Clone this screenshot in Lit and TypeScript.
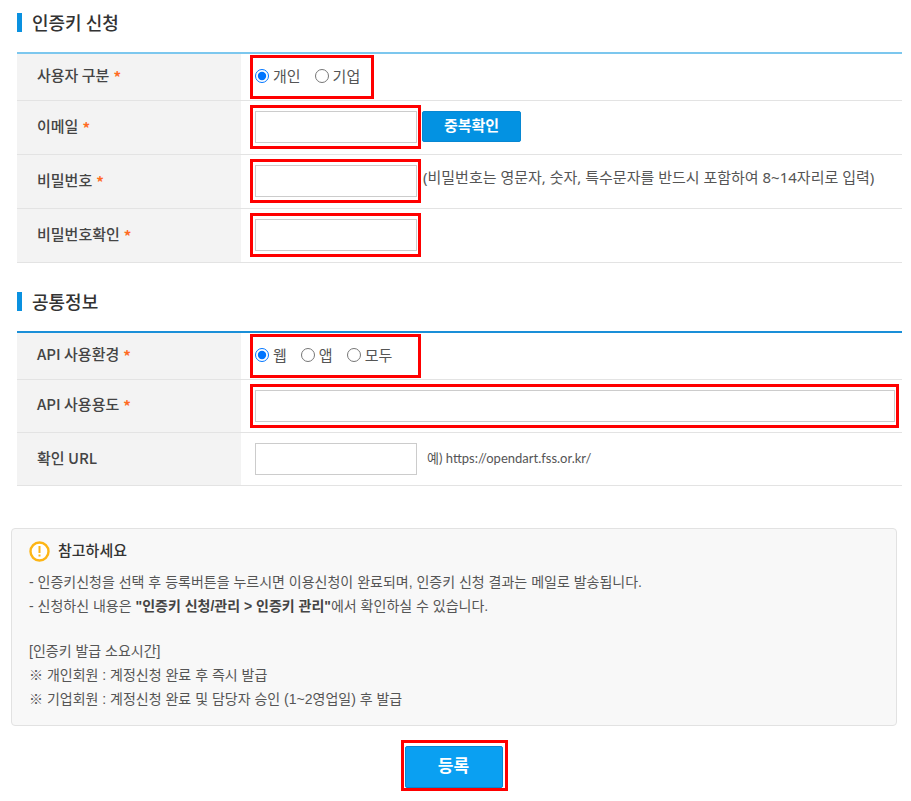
import { LitElement, html, css, nothing } from "lit";
import { customElement, property } from "lit/decorators.js";

const requiredMark = html`<span class="required" aria-hidden="true">*</span>`;

@customElement("section-title")
class SectionTitle extends LitElement {
  @property() text = "";

  static styles = css`
    :host {
      display: block;
    }
    .title {
      margin: 0 0 20px;
      padding-left: 10px;
      border-left: 5px solid #0a91e0;
      font-family: "Noto Sans CJK KR", "Noto Sans", sans-serif;
      font-size: 18px;
      line-height: 19px;
      font-weight: 500;
      color: #333;
    }
  `;

  render() {
    return html`<h2 class="title">${this.text}</h2>`;
  }
}

@customElement("app-root")
class AppRoot extends LitElement {
  static styles = css`
    :host {
      display: block;
      background: #fff;
      color: #555;
      font-family: "Noto Sans", "Noto Sans CJK KR", sans-serif;
      font-size: 14px;
      line-height: 24px;
    }
    * {
      box-sizing: border-box;
    }
    .page {
      padding: 13px 9px 10px 11px;
    }
    .section {
      margin: 0 0 29px 6px;
    }
    .sheet {
      width: 100%;
      border-collapse: separate;
      border-spacing: 0;
      border-top: 2px solid #7cc7ee;
    }
    .sheet.strong {
      border-top-color: #1a8fd8;
    }
    th,
    td {
      height: 54px;
      padding: 0;
      border-bottom: 1px solid #e3e3e3;
      vertical-align: middle;
    }
    .strong th,
    .strong td {
      height: 53px;
    }
    .sheet .short th,
    .sheet .short td {
      height: 47px;
    }
    th {
      width: 224px;
      padding: 0 0 2px 20px;
      background: #f3f3f3;
      text-align: left;
      font-family: "Noto Sans CJK KR", "Noto Sans", sans-serif;
      font-size: 15px;
      font-weight: 500;
      color: #444;
    }
    td {
      padding: 0 3px 1px 9px;
    }
    .short td {
      padding-bottom: 0;
    }
    .required {
      margin-left: 4px;
      font-weight: 700;
      vertical-align: -2px;
      color: #ff6a22;
    }
    .line {
      display: flex;
      align-items: center;
    }
    .mark {
      display: flex;
      align-items: center;
      height: 44px;
      padding: 0 1px 0 2px;
      border: 3px solid #f00;
    }
    .field {
      width: 171px;
    }
    .wide {
      width: 100%;
    }
    .plain {
      border-color: transparent;
    }
    .radios {
      gap: 14px;
      font-size: 15px;
    }
    .pair {
      width: 124px;
    }
    .radios label {
      display: flex;
      align-items: center;
      gap: 4px;
      padding-bottom: 2px;
    }
    .radios input {
      width: 14px;
      height: 14px;
      margin: 0;
    }
    .text {
      width: 100%;
      height: 32px;
      padding: 0 8px;
      border: 1px solid #ccc;
      border-radius: 0;
      background: #fff;
      font: inherit;
      color: inherit;
    }
    button {
      border: 1px solid #0787d2;
      border-radius: 2px;
      font-family: inherit;
      font-weight: 700;
      line-height: 24px;
      color: #fff;
    }
    .check {
      width: 99px;
      height: 31px;
      margin: 0 0 1px 1px;
      padding: 0 0 3px;
      background: #0392e2;
      font-size: 15px;
    }
    .hint {
      padding: 0 0 8px 2px;
      font-size: 15px;
    }
    .example {
      padding: 0 0 1px 6px;
      font-family: Lato, "Noto Sans CJK KR", sans-serif;
      font-size: 13px;
    }
    .notice {
      margin: 42px 5px 14px 0;
      padding: 10px 17px 14px;
      border: 1px solid #e2e2e2;
      border-radius: 4px;
      background: #f8f8f8;
      font-family: "Liberation Sans", "Noto Sans CJK KR", sans-serif;
    }
    .notice-title {
      display: flex;
      align-items: center;
      gap: 8px;
      margin: 0 0 7px;
      font-size: 15px;
      line-height: 24px;
      font-weight: 500;
      color: #333;
    }
    .list {
      margin: 0;
      padding: 0;
      list-style: none;
    }
    .times {
      margin: 21px 0 0;
    }
    .notice strong {
      font-weight: 600;
      color: #444;
    }
    .actions {
      display: flex;
      justify-content: center;
      padding-right: 5px;
    }
    .submit-mark {
      width: 107px;
      height: 51px;
      padding: 3px 1px 0;
      border: 3px solid #f00;
    }
    .submit {
      display: block;
      width: 98px;
      height: 42px;
      padding: 0 0 3px;
      background: #0aa0f2;
      font-size: 17px;
    }
  `;

  private radios(name: string, legend: string, options: string[], width: string) {
    return html`
      <div class="mark radios ${width}" role="radiogroup" aria-label=${legend}>
        ${options.map(
          (option, index) => html`
            <label>
              <input type="radio" name=${name} .checked=${index === 0} />
              <span>${option}</span>
            </label>
          `,
        )}
      </div>
    `;
  }

  private row(id: string, label: string, required: boolean, control: unknown) {
    return html`
      <tr>
        <th scope="row"><label for=${id}>${label}</label>${required ? requiredMark : nothing}</th>
        <td><div class="line">${control}</div></td>
      </tr>
    `;
  }

  private input(id: string, type = "text", frame = "field") {
    return html`<div class="mark ${frame}"><input class="text" id=${id} type=${type} /></div>`;
  }

  render() {
    return html`
      <main class="page">
        <section class="section">
          <section-title text="인증키 신청"></section-title>
          <table class="sheet">
            <tbody>
              <tr class="short">
                <th scope="row">사용자 구분${requiredMark}</th>
                <td>${this.radios("user", "사용자 구분", ["개인", "기업"], "pair")}</td>
              </tr>
              ${this.row(
                "email",
                "이메일",
                true,
                html`${this.input("email")}<button class="check" type="button">중복확인</button>`,
              )}
              ${this.row(
                "password",
                "비밀번호",
                true,
                html`${this.input("password", "password")}
                  <span class="hint">(비밀번호는 영문자, 숫자, 특수문자를 반드시 포함하여 8~14자리로 입력)</span>`,
              )}
              ${this.row("confirm", "비밀번호확인", true, this.input("confirm", "password"))}
            </tbody>
          </table>
        </section>

        <section class="section">
          <section-title text="공통정보"></section-title>
          <table class="sheet strong">
            <tbody>
              <tr class="short">
                <th scope="row">API 사용환경${requiredMark}</th>
                <td>${this.radios("platform", "API 사용환경", ["웹", "앱", "모두"], "field")}</td>
              </tr>
              ${this.row("purpose", "API 사용용도", true, this.input("purpose", "text", "wide"))}
              ${this.row(
                "url",
                "확인 URL",
                false,
                html`${this.input("url", "text", "field plain")}
                  <span class="example">예) https://opendart.fss.or.kr/</span>`,
              )}
            </tbody>
          </table>
        </section>

        <section class="notice">
          <h3 class="notice-title">
            <svg width="21" height="21" viewBox="0 0 21 21" aria-hidden="true">
              <circle cx="10.5" cy="10.5" r="9" fill="#fff" stroke="#fdb515" stroke-width="2.4" />
              <path d="M10.5 5v7M10.5 13.6v2" stroke="#fdb515" stroke-width="2" />
            </svg>
            참고하세요
          </h3>
          <ul class="list">
            <li>- 인증키신청을 선택 후 등록버튼을 누르시면 이용신청이 완료되며, 인증키 신청 결과는 메일로 발송됩니다.</li>
            <li>- 신청하신 내용은 <strong>"인증키 신청/관리 &gt; 인증키 관리"</strong>에서 확인하실 수 있습니다.</li>
          </ul>
          <p class="times">[인증키 발급 소요시간]</p>
          <ul class="list">
            <li>※ 개인회원 : 계정신청 완료 후 즉시 발급</li>
            <li>※ 기업회원 : 계정신청 완료 및 담당자 승인 (1~2영업일) 후 발급</li>
          </ul>
        </section>

        <div class="actions">
          <div class="submit-mark"><button class="submit" type="submit">등록</button></div>
        </div>
      </main>
    `;
  }
}
